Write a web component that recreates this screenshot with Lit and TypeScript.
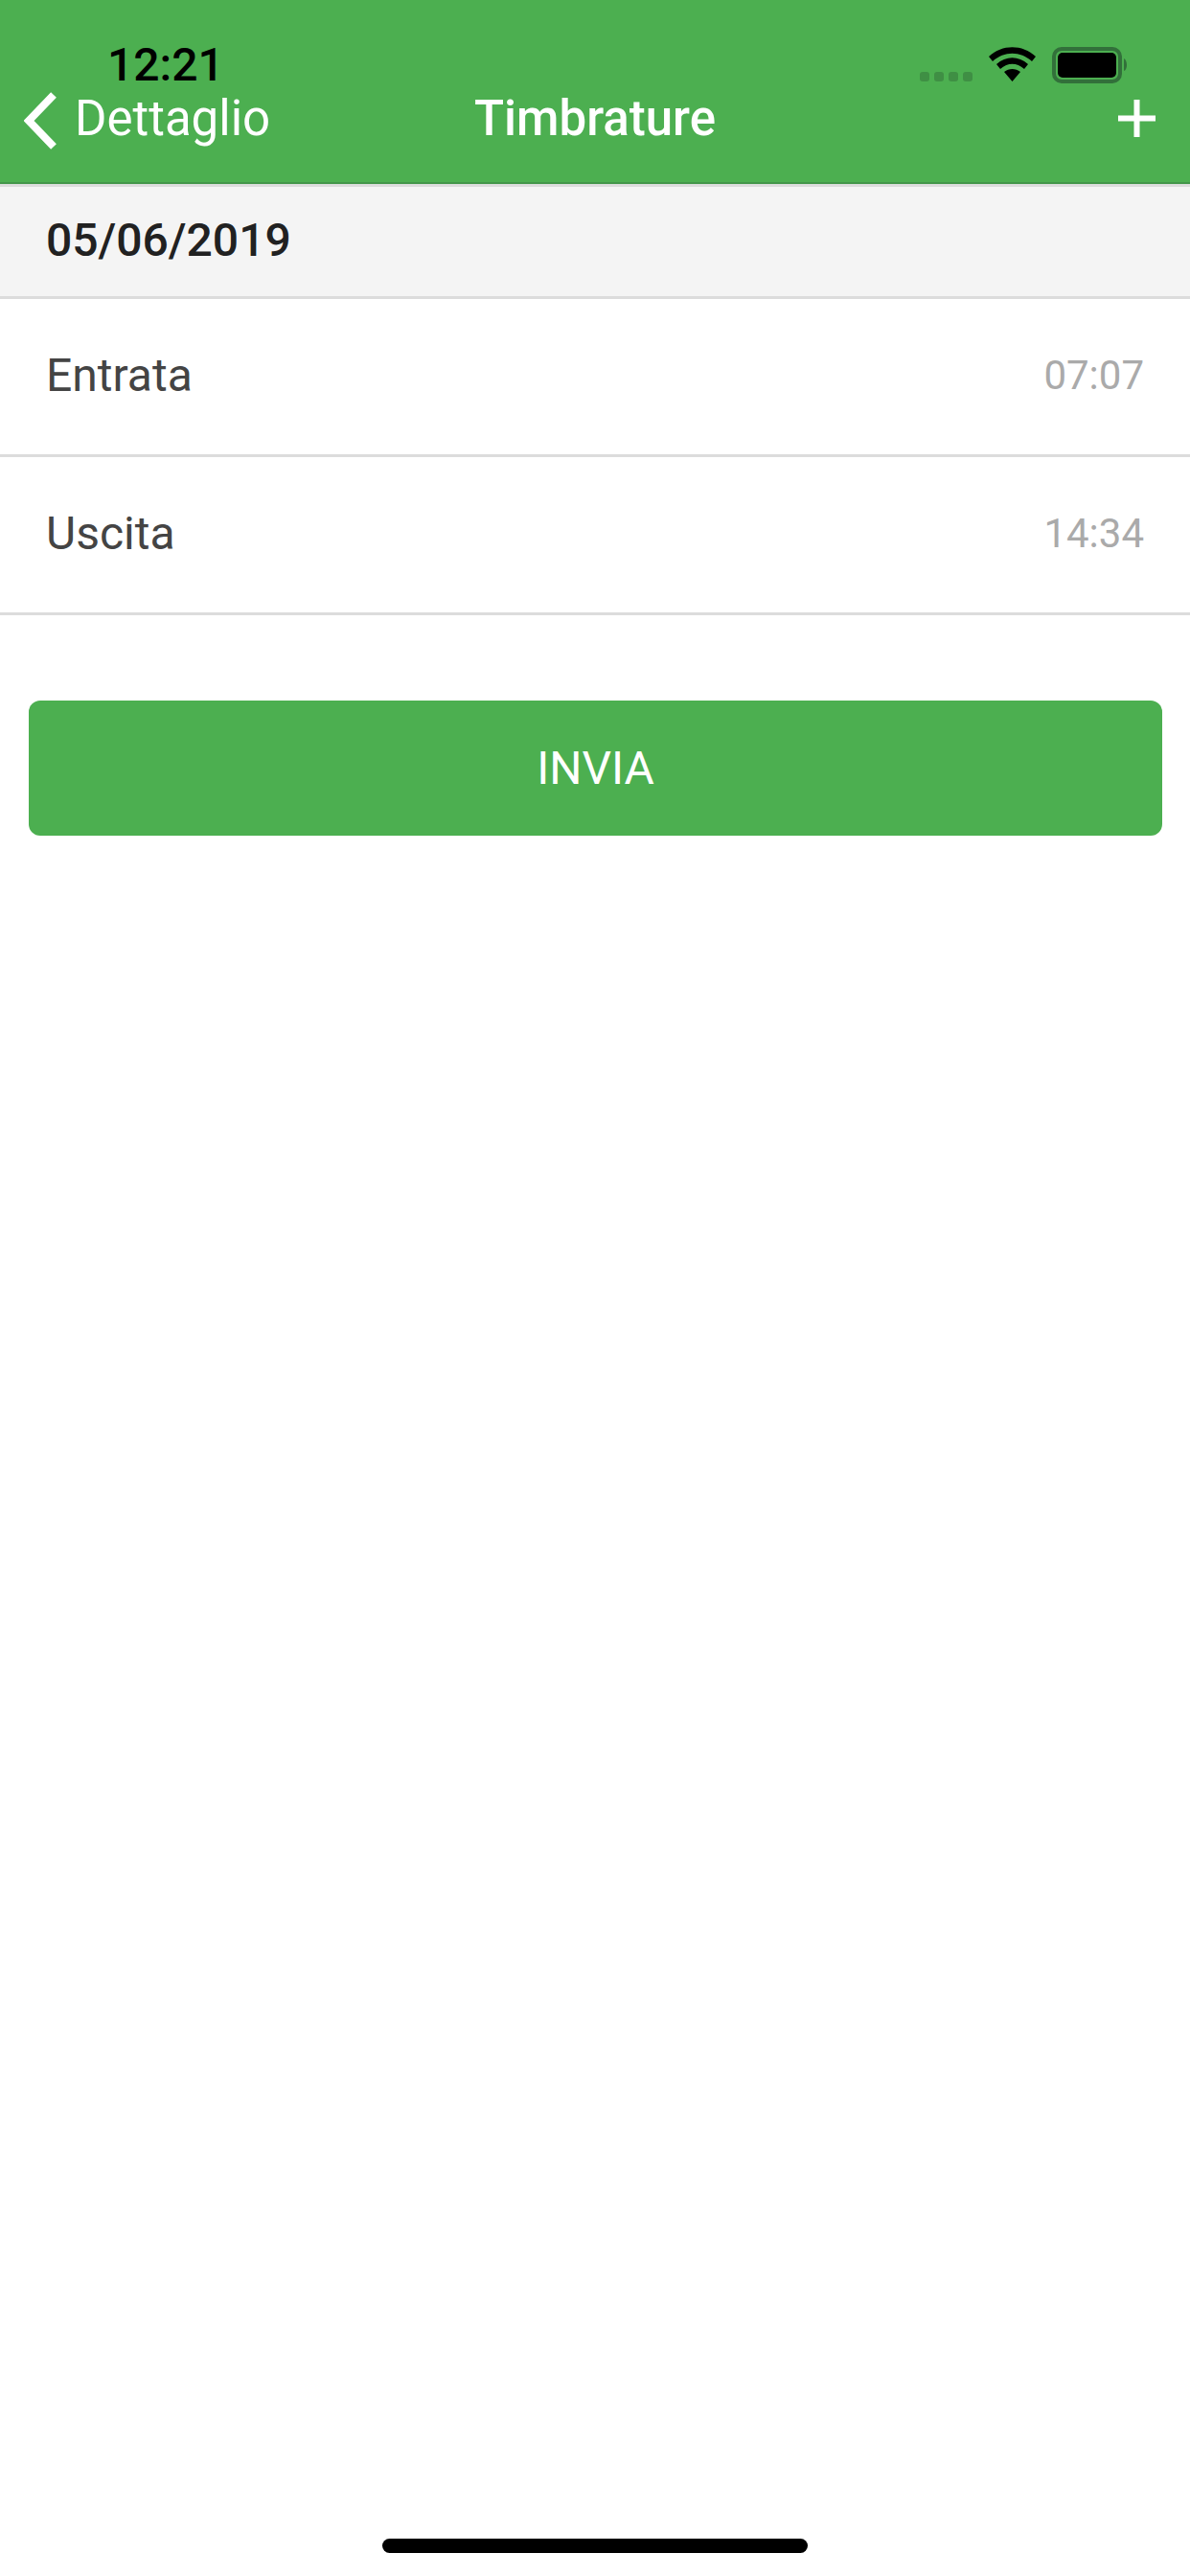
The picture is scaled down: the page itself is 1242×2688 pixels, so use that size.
import { LitElement, html, css } from 'lit';
import { customElement } from 'lit/decorators.js';

const rows = [
  { label: 'Entrata', time: '07:07' },
  { label: 'Uscita', time: '14:34' },
];

@customElement('app-root')
export class AppRoot extends LitElement {
  static styles = css`
    :host {
      display: block;
      width: 1242px;
      height: 2688px;
      background: #fff;
      font-family: Roboto, "Liberation Sans", sans-serif;
    }
    .page {
      height: 2688px;
      display: flex;
      flex-direction: column;
    }
    .header {
      flex: none;
      height: 192px;
      box-sizing: border-box;
      background: #4caf50;
      border-bottom: 2px solid #43964a;
    }
    .status {
      height: 88px;
      box-sizing: border-box;
      padding: 41px 0 0 112px;
      display: flex;
      align-items: flex-start;
    }
    .clock {
      font-size: 48px;
      line-height: 54px;
      font-weight: 500;
      color: #000;
      width: 848px;
    }
    .status svg {
      display: block;
      margin-top: 8px;
    }
    .nav {
      height: 70px;
      display: grid;
      grid-template-columns: 1fr auto 1fr;
      align-items: center;
      padding: 0 25px;
    }
    .back {
      display: flex;
      align-items: center;
      gap: 18px;
      font-size: 51px;
      font-weight: 400;
      color: #fff;
    }
    .back svg {
      margin-top: 5px;
    }
    .title {
      font-size: 51px;
      font-weight: 500;
      color: #fff;
    }
    .add {
      justify-self: end;
      display: block;
      margin-right: 11px;
    }
    .date {
      flex: none;
      height: 120px;
      box-sizing: border-box;
      border-top: 3px solid #dcdcdc;
      border-bottom: 3px solid #dcdcdc;
      background: #f4f4f4;
      padding: 0 0 3px 48px;
      display: flex;
      align-items: center;
      font-size: 48px;
      font-weight: 500;
      color: #212121;
    }
    .row {
      flex: none;
      height: 165px;
      box-sizing: border-box;
      border-bottom: 3px solid #dcdcdc;
      padding: 0 48px 4px;
      display: flex;
      align-items: center;
      justify-content: space-between;
    }
    .label {
      font-size: 48px;
      color: #444;
    }
    .time {
      font-size: 42px;
      color: #aaa;
    }
    .send {
      flex: none;
      margin: 89px 29px 0 30px;
      height: 141px;
      border-radius: 12px;
      background: #4caf50;
      display: flex;
      align-items: center;
      justify-content: center;
      font-size: 48px;
      font-weight: 400;
      color: #fff;
    }
    .home {
      flex: none;
      width: 444px;
      height: 15px;
      margin: auto auto 24px;
      border-radius: 8px;
      background: #000;
    }
  `;

  private statusIcons() {
    return html`<svg width="218" height="38" viewBox="0 0 218 38">
      <g fill="#3f8f44">
        <rect x="0" y="26" width="10" height="10" rx="3"></rect>
        <rect x="15" y="26" width="10" height="10" rx="3"></rect>
        <rect x="30" y="26" width="10" height="10" rx="3"></rect>
        <rect x="45" y="26" width="10" height="10" rx="3"></rect>
      </g>
      <path d="M72 10 C86 -3 107 -3 121 10 L117 15 C105 4 88 4 76 15 Z M80 18 C90 9 103 9 113 18 L109 23 C101 16 92 16 84 23 Z M88 26 C93 22 100 22 105 26 L96.5 36 Z" fill="#000"></path>
      <rect x="140" y="2" width="69" height="34" rx="8" fill="none" stroke="#32703a" stroke-width="4"></rect>
      <rect x="144" y="6" width="61" height="26" rx="5" fill="#000"></rect>
      <path d="M213 12 C217 14 217 24 213 25 Z" fill="#32703a"></path>
    </svg>`;
  }

  render() {
    return html`
      <div class="page">
        <div class="header">
          <div class="status">
            <span class="clock">12:21</span>
            ${this.statusIcons()}
          </div>
          <div class="nav">
            <div class="back">
              <svg width="35" height="60" viewBox="0 0 35 60">
                <path d="M31 3 L5 30 L31 57" fill="none" stroke="#fff" stroke-width="8"></path>
              </svg>
              <span>Dettaglio</span>
            </div>
            <div class="title">Timbrature</div>
            <svg class="add" width="39" height="39" viewBox="0 0 39 39">
              <path d="M16.5 0h6v16.5H39v6H22.5V39h-6V22.5H0v-6h16.5z" fill="#fff"></path>
            </svg>
          </div>
        </div>
        <div class="date">05/06/2019</div>
        ${rows.map(r => html`
          <div class="row">
            <span class="label">${r.label}</span>
            <span class="time">${r.time}</span>
          </div>
        `)}
        <div class="send">INVIA</div>
        <div class="home"></div>
      </div>
    `;
  }
}
